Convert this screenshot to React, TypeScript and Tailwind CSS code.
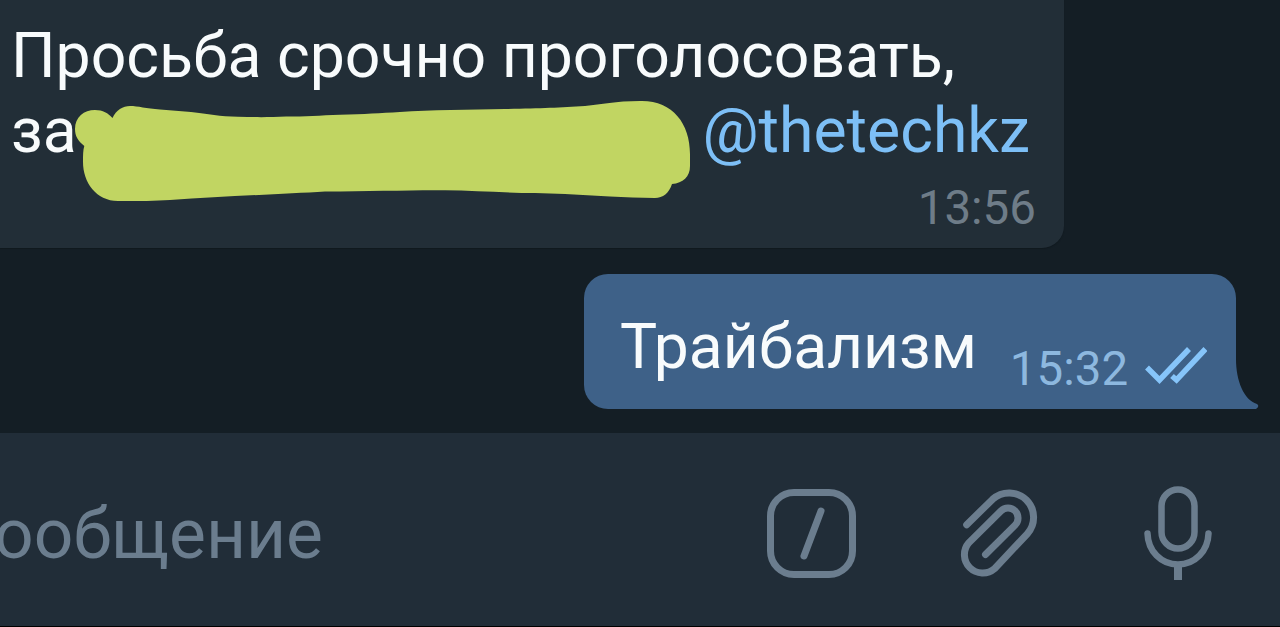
interface TextProps {
  time: string;
}

// Marker stroke that hides the name in the incoming message
function Redaction() {
  return (
    <svg
      className="absolute left-0 top-0 pointer-events-none"
      width="1064"
      height="248"
      viewBox="0 0 1064 248"
      fill="none"
      aria-hidden="true"
    >
      <path
        fill="#c1d562"
        d="M84.300 146C78 141 75 136 75 129C75 117 84 110 95 110C103 110 108 113 112.500 118C116 110 123 106 130 106C138 106 146 108.500 160 109.500L191 112C208 114 220 116.500 238 116.700C256 117.300 270 117.300 286 116.500C305 116.500 320 115.500 340 114.700C365 114.200 380 113 400 112C430 110 470 109.500 505 109C540 108.500 560 107.500 585 106C602 104.500 615 101 640 101C672 100 690 123 690 154V166C690 177 683 183 672 184C669 193 663 198 655 198C625 197.500 595 195.500 565 194L535 193C505 193 475 190.500 445 190.300C410 190 370 191.500 325 191.500C285 194 225 196 170 200C155 201 140 201 118 201C96 201 83 182 83 162C83 155 83 150 84.300 146Z"
      />
    </svg>
  );
}

function IncomingMessage({ time }: TextProps) {
  return (
    <article className="relative flex h-[248px] w-[1064px] flex-col rounded-br-[22px] bg-[#222e37] pl-[11px] pr-[28px] pt-[18px] shadow-[0_1px_1px_#10191f]">
      <p className="whitespace-nowrap text-[62.5px] leading-[75px] text-[#f8fbfc]">
        Просьба срочно проголосовать,
      </p>
      <p className="flex justify-between whitespace-nowrap pr-[6px] text-[62.5px] leading-[75px] text-[#f8fbfc]">
        <span>за</span>
        <a className="text-[#7dbff6]">@thetechkz</a>
      </p>
      <time className="mt-[12px] self-end text-[47.5px] leading-[56px] text-[#6e7c88]">{time}</time>
      <Redaction />
    </article>
  );
}

function ReadChecks() {
  return (
    <svg width="62" height="40" viewBox="0 0 62 40" fill="none" stroke="#86c5fa" strokeWidth="5.500" aria-hidden="true">
      <path d="M2 21.500L14.500 34L44 3" />
      <path d="M27 30L31.500 34L60.500 3" />
    </svg>
  );
}

function OutgoingMessage({ time }: TextProps) {
  return (
    <article className="relative flex h-[135px] w-[652px] items-start rounded-[24px] rounded-br-none bg-[#3e6188] pl-[36px]">
      <p className="mt-[35px] text-[62.3px] leading-[75px] text-[#f8fbfc]">Трайбализм</p>
      <time className="ml-[33px] mt-[67px] text-[47.5px] leading-[56px] text-[#8db8df]">{time}</time>
      <div className="ml-[17px] mt-[72px]">
        <ReadChecks />
      </div>
      {/* Bubble tail */}
      <svg className="absolute bottom-0 left-full" width="24" height="50" viewBox="0 0 24 50" aria-hidden="true">
        <path fill="#3e6188" d="M-1 0H0C0 22 8 41 21 45Q24 47 20 50H-1Z" />
      </svg>
    </article>
  );
}

function Composer() {
  return (
    <footer className="flex h-[194px] items-start overflow-hidden border-b border-black bg-[#212d38] text-[#6b7d8e]">
      <p className="-ml-[6px] mt-[61px] whitespace-nowrap text-[69.5px] leading-[82px]">ообщение</p>
      <button className="ml-auto mr-[103px] mt-[56px]" aria-label="Commands">
        <svg width="90" height="90" viewBox="0 0 90 90" fill="none" stroke="currentColor" strokeWidth="7" strokeLinecap="round">
          <rect x="3.500" y="3.500" width="82" height="82" rx="23.500" />
          <path d="M54 22L37 67" />
        </svg>
      </button>
      <button className="mr-[105px] mt-[55px]" aria-label="Attach">
        <svg width="78" height="90" viewBox="0 0 78 90" fill="none" stroke="currentColor" strokeWidth="7" strokeLinecap="round">
          <path d="M6.700 36.700L32.700 11.200A24.500 24.500 0 0 1 67.300 45.800L34.600 80.600A18.300 18.300 0 0 1 8.800 54.800L40.900 22.900A10 10 0 0 1 55.100 37.100L25.500 66.500" />
        </svg>
      </button>
      <button className="mr-[67px] mt-[52px]" aria-label="Record voice message">
        <svg width="70" height="96" viewBox="0 0 70 96" fill="none" stroke="currentColor" strokeWidth="6.500" strokeLinecap="round">
          <rect x="18.500" y="4.500" width="33" height="59" rx="16.500" />
          <path d="M4.500 48.500C5 66 18 79.500 35 79.500S65 66 65.500 48.500" />
          <path strokeLinecap="butt" strokeWidth="8" d="M35 79V95" />
        </svg>
      </button>
    </footer>
  );
}

export default function App() {
  return (
    <main className="flex h-[627px] w-[1280px] flex-col overflow-hidden bg-[#141e25] font-['Roboto',sans-serif]">
      <IncomingMessage time="13:56" />
      <div className="mb-[24px] mt-[26px] flex justify-end pr-[44px]">
        <OutgoingMessage time="15:32" />
      </div>
      <Composer />
    </main>
  );
}
